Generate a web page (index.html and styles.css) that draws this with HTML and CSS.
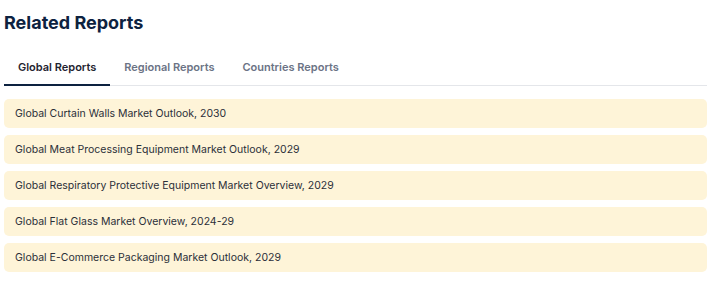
FILE: index.html
```html
<!DOCTYPE html>
<html lang="en">
<head>
    <meta charset="UTF-8">
    <title>Related Reports</title>
    <link rel="stylesheet" href="styles.css">
</head>
<body>

<div class="related">
    <h2>Related Reports</h2>
    <div class="tabs">
        <a class="tab active" href="#">Global Reports</a>
        <a class="tab" href="#">Regional Reports</a>
        <a class="tab" href="#">Countries Reports</a>
    </div>
    <ul class="report-list">
        <li><a href="#">Global Curtain Walls Market Outlook, 2030</a></li>
        <li><a href="#">Global Meat Processing Equipment Market Outlook, 2029</a></li>
        <li><a href="#">Global Respiratory Protective Equipment Market Overview, 2029</a></li>
        <li><a href="#">Global Flat Glass Market Overview, 2024-29</a></li>
        <li><a href="#">Global E-Commerce Packaging Market Outlook, 2029</a></li>
    </ul>
</div>

</body>
</html>
```
FILE: styles.css
```css
body {
    font-family: Inter, "Noto Sans", Arial, sans-serif;
    background-color: #ffffff;
    margin: 0;
    padding: 0;
}
.related {
    width: 703px;
    padding: 0 0 0 4px;
}
h2 {
    margin: 0;
    padding-top: 11px;
    font-size: 18px;
    line-height: 24px;
    font-weight: 700;
    color: #0d2240;
}
.tabs {
    display: flex;
    margin-top: 18px;
    border-bottom: 1px solid #e4e6ea;
}
.tab {
    display: block;
    padding: 7px 14px 10px;
    font-size: 11px;
    line-height: 14px;
    font-weight: 600;
    color: #6b7385;
    text-decoration: none;
    border-bottom: 2px solid transparent;
    margin-bottom: -1px;
}
.tab.active {
    color: #1f2430;
    border-bottom-color: #0d2240;
}
.report-list {
    list-style: none;
    margin: 13px 0 0;
    padding: 0;
    display: flex;
    flex-direction: column;
    gap: 7px;
}
.report-list li a {
    display: block;
    background-color: #fef4d8;
    border-radius: 5px;
    padding: 7.5px 11px;
    font-size: 10.5px;
    line-height: 14px;
    color: #2b2f38;
    text-decoration: none;
}
```
